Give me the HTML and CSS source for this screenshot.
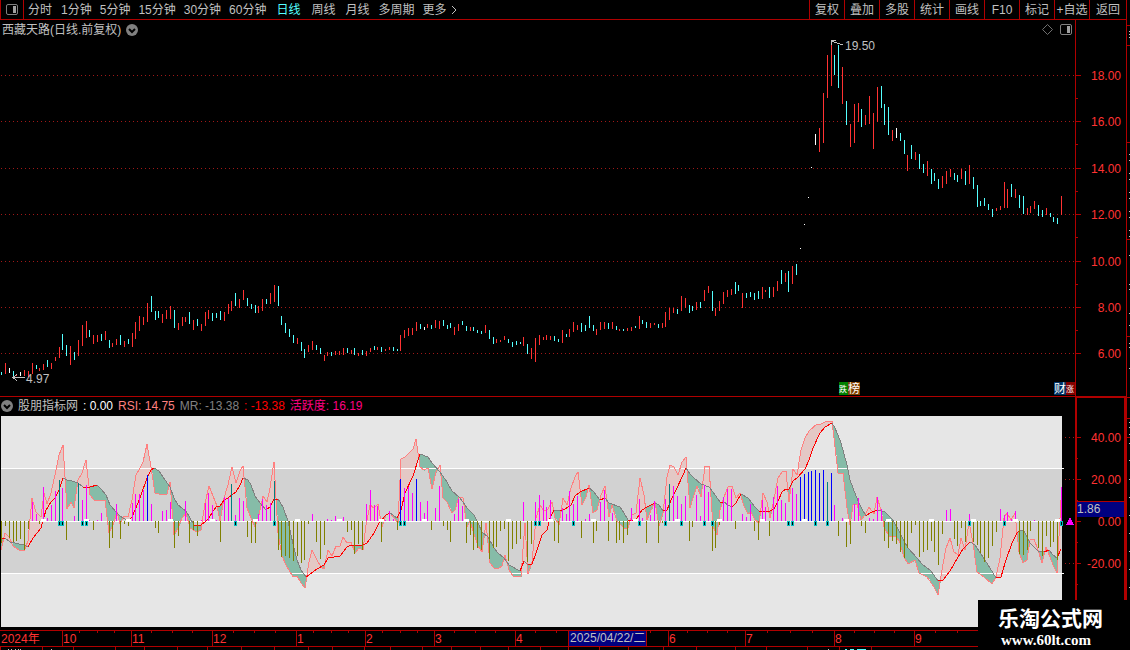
FILE: index.html
```html
<!DOCTYPE html>
<html lang="zh-CN">
  <head>
    <meta charset="utf-8">
    <title>西藏天路</title>
    <link rel="stylesheet" href="styles.css">
  </head>
  <body>
    <div class="app">
      <div class="main">
        <header class="toolbar">
          <button class="layout-button" aria-label="布局">
            <svg width="12" height="11" viewBox="0 0 12 11">
              <rect x="0.5" y="0.5" width="11" height="10" rx="1.5" fill="none" stroke="#808080"/>
              <rect x="7" y="2" width="3" height="7" fill="#a0a0a0"/>
            </svg>
          </button>
          <nav class="periods">
            <button class="period short">分时</button>
            <button class="period">1分钟</button>
            <button class="period">5分钟</button>
            <button class="period">15分钟</button>
            <button class="period">30分钟</button>
            <button class="period">60分钟</button>
            <button class="period short active">日线</button>
            <button class="period short">周线</button>
            <button class="period short">月线</button>
            <button class="period">多周期</button>
            <button class="period more">更多
              <svg width="6" height="10" viewBox="0 0 6 10">
                <path d="M1 1 L5 5 L1 9" fill="none" stroke="#c0c0c0"/>
              </svg>
            </button>
          </nav>
          <nav class="tools">
            <button class="tool">复权</button>
            <button class="tool">叠加</button>
            <button class="tool">多股</button>
            <button class="tool">统计</button>
            <button class="tool">画线</button>
            <button class="tool">F10</button>
            <button class="tool">标记</button>
            <button class="tool">+自选</button>
            <button class="tool last">返回</button>
          </nav>
        </header>

        <section class="price-panel">
          <div class="plot">
            <div class="price-title">
              <span>西藏天路(日线.前复权)</span>
              <svg width="12" height="12" viewBox="0 0 12 12">
                <circle cx="6" cy="6" r="6" fill="#808080"/>
                <path d="M3 5 L6 8 L9 5" fill="none" stroke="#000" stroke-width="2"/>
              </svg>
              <span class="title-icons">
                <svg width="11" height="11" viewBox="0 0 11 11">
                  <path d="M5.5 0.5 L10.5 5.5 L5.5 10.5 L0.5 5.5 Z" fill="none" stroke="#707070"/>
                </svg>
                <svg width="12" height="11" viewBox="0 0 12 11">
                  <rect x="0.5" y="0.5" width="11" height="10" rx="1.5" fill="none" stroke="#808080"/>
                  <rect x="7" y="2" width="3" height="7" fill="#a0a0a0"/>
                </svg>
              </span>
            </div>
            <svg class="chart" id="priceChart" height="357"></svg>
          </div>
          <svg class="axis" id="priceAxis" width="50" height="376" viewBox="1076 20 50 376"></svg>
        </section>

        <section class="indicator-panel">
          <div class="plot">
            <div class="indicator-title">
              <svg width="12" height="12" viewBox="0 0 12 12">
                <circle cx="6" cy="6" r="6" fill="#808080"/>
                <path d="M3 5 L6 8 L9 5" fill="none" stroke="#000" stroke-width="2"/>
              </svg>
              <span class="name">股朋指标网</span>
              <span class="zero">: 0.00</span>
              <span class="rsi">RSI: 14.75</span>
              <span class="mr">MR: -13.38</span>
              <span class="mr-red">: -13.38</span>
              <span class="activity">活跃度: 16.19</span>
            </div>
            <svg class="chart" id="indicatorChart" height="215"></svg>
          </div>
          <svg class="axis" id="indicatorAxis" width="47" height="232" viewBox="1077 398 47 232"></svg>
        </section>

        <svg class="chart" id="dateAxis" height="20"></svg>
      </div>
      <svg class="side" id="sideStrip" width="3" height="650" viewBox="1127 0 3 650"></svg>

      <div class="watermark">
        <div class="site-name">乐淘公式网</div>
        <div class="site-url">www.60lt.com</div>
      </div>
    </div>
    <script src="chart.js"></script>
  </body>
</html>
```
FILE: styles.css
```css
body{
  margin: 0;
  background-color: black;
  color: #c0c0c0;
  font-family: "Liberation Sans", "Noto Sans CJK SC", sans-serif;
  font-size: 12px;
  line-height: 18px;
  overflow: hidden;
}
svg{
  display: block;
  flex: none;
}
svg text{
  font-size: 12px;
}
svg .half{
  font-size: 8px;
}
button{
  margin: 0;
  padding: 0;
  border: 0;
  background: none;
  color: inherit;
  font: inherit;
  white-space: nowrap;
  cursor: pointer;
}
.app{
  position: relative;
  display: flex;
}
.main{
  flex: 1;
  min-width: 0;
}
.side{
  border-left: 1px solid #b00000;
}

/* toolbar */
.toolbar{
  display: flex;
  height: 19px;
  border-bottom: 1px solid #b00000;
}
.layout-button{
  display: flex;
  align-items: center;
  justify-content: center;
  width: 24px;
  box-sizing: border-box;
  border-left: 1px solid #b00000;
  border-right: 1px solid #b00000;
}
.periods{
  display: flex;
  gap: 8px;
  padding-left: 3px;
}
.short{
  padding: 0 1px;
}
.active{
  padding: 0 2px;
  color: #54ffff;
}
.more{
  display: flex;
  align-items: center;
  gap: 4px;
}
.tools{
  display: flex;
  margin-left: auto;
}
.tool{
  width: 35px;
  box-sizing: border-box;
  border-left: 1px solid #b00000;
}
.last{
  width: 37px;
}

/* panels */
.price-panel,
.indicator-panel{
  display: flex;
}
.price-panel{
  border-bottom: 1px solid #b00000;
}
.plot{
  flex: 1;
  min-width: 0;
}
.chart{
  width: 100%;
  shape-rendering: crispEdges;
}
.axis{
  shape-rendering: crispEdges;
  border-left: 1px solid #b00000;
}
.indicator-panel .axis{
  border: 2px solid #b00000;
  border-top-width: 1px;
  border-bottom: 0;
}
.price-title,
.indicator-title{
  display: flex;
  align-items: center;
  white-space: nowrap;
}
.price-title{
  height: 19px;
  gap: 5px;
  padding-left: 2px;
}
.title-icons{
  display: flex;
  gap: 7px;
  margin-left: auto;
  padding-right: 3px;
}
.indicator-title{
  height: 18px;
  gap: 5px;
  padding-left: 1px;
}
.zero{
  color: white;
}
.rsi{
  color: #ff8080;
}
.mr{
  color: #808080;
}
.mr-red{
  color: #ff0000;
}
.activity{
  color: #ff0080;
}

.watermark{
  position: absolute;
  right: 0;
  bottom: 0;
  width: 152px;
  height: 50px;
  box-sizing: border-box;
  padding: 2px 0 0 20px;
  background-color: black;
  color: white;
  font-weight: bold;
}
.site-name{
  font-family: "Noto Sans CJK SC", sans-serif;
  font-size: 21px;
  line-height: 30px;
}
.site-url{
  padding-left: 3px;
  font-family: "Liberation Serif", serif;
  font-size: 15px;
  line-height: 16px;
}
```
FILE: chart.js
```js
const RED = '#b00000';
const BASE_WIDTH = 1075;
const STEP = 3.841;
const ZERO = 521;

// one item per day: colour, high, low
const candles = `
c372-375 r363-374 w368-373 c371-377 r374-376 w372-376 r370-376 r371-377 r363-374 c365-369
r368-371 r364-370 c360-367 r363-369 r357-361 r347-358 c334-350 c345-356 r346-365 c352-360
r340-356 r325-346 r321-338 c330-337 r335-344 r335-342 c334-341 r331-340 c340-348 r343-347
r339-345 c335-345 r341-347 c339-344 r333-347 r322-339 r316-331 r317-325 r303-322 c296-312
c311-320 c311-318 r314-323 r310-319 r306-319 c310-328 r323-330 r317-326 r317-322 c312-324
r320-330 c319-326 r324-331 r312-326 r310-319 c313-321 c313-318 c311-320 r312-321 r304-314
r301-311 c293-306 r299-308 r290-300 c298-306 c304-309 c305-313 r306-313 r299-311 c299-304
r293-304 r285-302 c286-306 c316-325 c323-333 c329-337 c335-343 r338-344 c342-351 c349-358
r345-352 r341-350 c345-350 c348-354 r355-361 r352-356 c352-356 r351-355 r351-355 r348-355
c348-353 r350-354 c348-355 r353-356 c350-355 r351-356 r348-352 c346-350 r347-350 c347-352
r349-351 r347-350 c347-351 c349-351 r335-351 r330-338 r328-336 r328-335 r322-331 c324-329
w327-330 r324-328 c325-329 r320-328 r321-329 c320-326 c325-329 c323-328 r327-335 r324-331
c321-325 c326-331 r327-331 c327-331 c330-333 c331-334 r325-333 c330-339 c337-344 r339-343
r340-342 r336-340 c339-343 c342-347 c341-345 c342-344 r337-346 c344-354 r348-359 r338-362
r335-345 r337-340 r335-340 r336-340 c336-341 c339-342 r330-343 c334-337 r329-337 r322-332
r325-330 c323-332 c325-331 c316-328 c325-331 r329-335 r322-330 r322-329 c323-329 r322-329
c326-330 r329-331 c329-331 r328-331 r327-331 c326-328 r316-329 c320-324 c322-328 r323-328
r323-325 c324-328 r323-328 r312-327 r308-320 r308-313 c309-314 r296-311 r298-308 c305-313
c306-311 r302-310 c302-308 r290-301 r286-293 c291-311 r308-316 r301-311 r292-304 r290-297
r289-295 c282-294 c285-291 r293-308 c293-298 c292-297 c293-300 c291-299 r287-299 r290-292
c287-298 r287-297 r281-291 c270-284 r273-282 c271-292 r266-284 c264-275 w248-249 w224-225
w197-198 w167-168 w134-145 r128-152 r93-143 r55-98 r43-86 c55-75 c45-88 r67-104
c101-125 r124-147 r104-143 r103-122 c109-127 r115-125 r96-124 r113-149 r87-122 c86-108
c104-125 c107-135 r130-141 w128-138 c133-141 c140-154 r155-171 c145-159 r152-160 c154-169
c164-173 r161-176 c169-184 c173-181 c179-189 r176-188 r171-184 r169-177 c173-180 c175-182
r169-179 c171-185 r165-184 c177-189 c185-207 c201-206 c198-206 c204-210 c209-217 r208-211
r206-210 r182-208 r189-208 c184-197 r189-198 c195-208 c196-214 r208-215 r206-213 r201-209
c205-216 c210-217 r208-215 c213-217 c217-222 c218-224 r196-215`.trim().split(/\s+/);

// histogram heights, t and b mark the teal and blue bars
const histogram = `
-22 -5 -17 -21 -20 -18 -29 -8 19 7 -3 34 3 16 30 41t 33 -19 0 5
38t 21 36 1 -9 1 8 0 -27 -17 17 -18 -3 -5 18 27 27 31 46b 17
-7 -12 10 11 19 -27 -15 0 20 -22 -9 -15 1 18 28 16 1 -21 24 23
37t 6 23 20 -16 -22 -22 7 22 16 18 40t -29 -36 -35 -37 -40 -35 -42 -39
-3 7 -21 -38 -24 2 1 5 2 4 -11 -9 -33 -23 -29 17 31 16 15 -21
1 10 2 -9 42b 33 34 28 42b 19 8 20 -9 13 35 -5 -9 -21 7 22
15 -22 -14 -29 -27 -29 0 -38 -27 -26 -10 -8 -40 -28 -23 -18 19 -41 -23 19
26 21 14 21 -20 -22 13 7 30 17 25 -17 2 7 -22 -10 19 31 -20 8
-22 -19 -22 -14 13 2 22 3 -22 6 20 -22 -2 22 37t 35 25 17 25 -20
-6 26 5 36 29 -30 -27 -4 24 32 32 -8 0 7 4 17 -10 -19 21 14
-15 24 35 21 18 0 33 27 44b 47b 49b 50b 51b 48b 51b 39t 48b 16 -15 3
-26 -23 17 23 -5 -12 3 2 24 12 -20 -27 -20 -23 -31 -37 -27 -12 -4 -36
-31 -29 -20 -31 -44 -13 11 12 -18 -25 -7 -21 7 -21 -24 -32 -41 -37 -25 -11
12 6 9 2 10 -33 -34 -29 -10 1 -27 -35 -15 -26 -21 -39 34`.trim().split(/\s+/);

const fast = points(`
1,550 5,533 9,537 13,546 19,550 24,551 28,541 32,498 36,512 41,517 44,493 47,504 51,493 55,475 59,455
63,445 67,509 71,502 74,508 78,480 82,473 86,460 90,495 94,500 101,501 105,500 109,533 113,525 117,512
120,524 124,516 128,517 132,500 136,475 140,468 143,462 147,444 151,467 155,493 159,494 167,494 170,482
174,535 178,528 182,518 186,513 190,528 197,532 201,530 205,503 209,486 213,496 217,506 220,521 224,498
228,485 232,467 236,483 240,471 243,466 247,508 251,518 255,527 259,515 263,496 267,502 270,488 274,462
278,533 282,556 286,565 293,577 297,576 301,583 305,588 309,562 312,550 317,560 321,567 324,569 328,550
332,556 336,546 340,546 343,537 347,543 351,542 355,553 359,548 363,550 366,525 370,505 374,508 378,504
382,527 386,515 390,513 394,518 398,523 401,459 405,457 409,453 413,449 416,439 420,467 424,470 428,468
432,489 436,472 440,465 443,498 447,502 452,513 455,510 459,497 463,498 467,527 470,521 474,534 478,546
482,552 486,523 490,563 494,568 498,569 502,566 505,555 509,570 513,576 521,576 525,523 528,574 532,562
536,518 540,505 544,511 548,509 552,502 555,518 559,525 563,498 567,505 571,488 575,477 578,472 582,505
586,497 589,485 593,513 597,510 601,495 605,486 609,517 612,505 617,521 624,528 628,528 632,515 636,513
640,478 644,495 647,520 651,510 655,502 659,526 663,513 667,477 670,465 674,467 678,475 682,462 686,457
690,508 693,498 697,486 701,497 705,466 709,466 713,527 717,535 720,510 724,497 728,487 732,486 736,498
740,493 744,506 748,514 751,512 755,520 759,523 763,493 767,502 770,518 774,499 778,478 782,472 786,471
789,502 793,469 797,475 801,450 805,438 809,431 817,424 821,424 825,422 832,421 835,447 838,473 843,473
847,508 850,525 853,505 857,504 861,520 865,515 869,507 874,514 877,497 881,510 884,527 889,536 896,536
900,543 904,557 908,564 915,560 919,573 927,577 934,587 938,595 942,570 946,548 950,538 954,552 958,555
961,538 965,550 969,522 973,543 977,572 984,577 992,584 996,577 1000,558 1004,518 1007,513 1011,520
1015,513 1019,552 1023,563 1027,560 1030,540 1034,539 1038,550 1042,563 1046,547 1050,557 1053,565
1057,573 1061,500`);

const slow = points(`
1,538 5,538 10,542 24,545 28,547 33,538 41,528 46,510 51,502 55,498 59,490 63,478 67,480 72,481 78,483
83,487 90,487 97,485 101,489 106,495 110,505 117,513 120,516 128,521 132,517 140,498 147,478 151,470
154,468 159,471 163,477 170,487 174,498 178,505 186,511 190,518 194,525 201,525 205,522 209,518 213,511
217,506 220,506 224,500 228,498 236,492 240,485 243,478 248,480 251,485 255,496 260,503 266,510 270,507
274,499 278,499 283,507 288,521 293,544 297,560 301,570 306,577 309,575 317,569 324,565 328,558 340,556
347,547 351,545 363,545 367,543 374,533 379,523 386,515 390,513 397,518 401,510 405,493 413,476 420,454
428,457 432,463 440,472 447,482 452,491 459,497 463,502 467,508 474,515 478,523 482,532 488,537 494,548
498,553 504,558 509,565 520,571 524,561 528,565 532,564 536,553 542,535 547,530 550,518 554,510 560,511
565,509 571,505 575,496 580,492 589,488 593,491 600,500 605,498 609,503 620,507 624,513 628,520 636,520
642,510 647,507 655,503 659,505 663,511 667,510 671,500 677,488 683,475 686,468 690,474 694,478 701,484
709,487 713,492 720,502 724,502 728,505 732,507 736,503 741,494 748,498 755,507 759,511 770,511 774,509
778,501 782,492 786,489 789,489 793,481 798,477 805,469 809,460 813,448 820,433 825,427 832,423 835,428
840,440 843,450 847,465 850,480 856,496 861,507 866,516 870,513 877,510 885,512 892,519 897,527 903,539
908,548 917,558 922,564 931,571 938,581 943,580 950,571 958,557 963,549 970,542 975,545 983,557 990,568
996,578 1001,577 1005,563 1012,543 1017,533 1020,530 1024,531 1030,543 1038,551 1044,552 1049,550
1053,555 1057,558 1061,549`);

const signals = [15, 16, 21, 22, 61, 71, 104, 105, 139, 140, 149, 166, 173, 177, 183, 185, 205, 206, 212, 215, 252, 261, 276];
const prices = [[75, '18.00'], [121, '16.00'], [168, '14.00'], [214, '12.00'], [261, '10.00'], [307, '8.00'], [353, '6.00']];
const months = [[62, '10'], [131, '11'], [212, '12'], [296, '1'], [365, '2'], [434, '3'], [515, '4'], [668, '6'], [745, '7'], [834, '8'], [914, '9']];

let k = 1;

function points(text){
  return text.trim().split(/\s+/).map((p) => p.split(',').map(Number));
}
function at(line, x){
  for(let i=1; i<line.length; i++){
    if(x <= line[i][0]){
      const [x1, y1] = line[i-1];
      const [x2, y2] = line[i];
      return y1 + (y2 - y1) * (x - x1) / (x2 - x1);
    }
  }
  return line[line.length-1][1];
}
function sx(x){
  return Math.round(x * k);
}
function barX(i){
  return Math.round((1 + i * STEP) * k);
}
function rect(x, y, w, h, fill){
  return `<rect x="${x}" y="${y}" width="${w}" height="${h}" fill="${fill}"/>`;
}
function label(x, y, text, fill, anchor='start'){
  return `<text x="${x}" y="${y}" fill="${fill}" text-anchor="${anchor}">${text}</text>`;
}
function halfLabel(x, y, text){
  return `<text class="half" x="${x}" y="${y}" fill="white">${text}</text>`;
}
function dots(x1, x2, y){
  let html = '';
  for(let x=x1; x<x2; x+=4){
    html += rect(x, y, 1, 1, '#a01818');
  }
  return html;
}
function draw(id, top, html){
  const svg = document.getElementById(id);
  svg.setAttribute('viewBox', `0 ${top} ${svg.clientWidth} ${svg.getAttribute('height')}`);
  svg.innerHTML = html;
}

function drawPrice(width){
  const colors = {c: '#54ffff', r: '#ff3232', w: '#ffffff'};
  let html = '';
  prices.forEach(([y]) => html += dots(1, width, y));
  candles.forEach((item, i) => {
    const [high, low] = item.slice(1).split('-').map(Number);
    html += rect(barX(i), high, 1, low - high, colors[item[0]]);
  });
  const peak = sx(831);
  html += `<path d="M${peak + 12} 45 L${peak} 41 M${peak + 5} 40 H${peak} V45" fill="none" stroke="#c0c0c0"/>`;
  html += label(peak + 14, 50, '19.50', '#c0c0c0');
  html += `<path d="M25 377.5 H13 M17 374 L13 377.5 L17 381" fill="none" stroke="#c0c0c0"/>`;
  html += label(26, 383, '4.97', '#c0c0c0');

  const badge = sx(839);
  html += rect(badge, 382, 9, 13, '#008000') + halfLabel(badge, 392, '跌');
  html += rect(badge + 9, 382, 12, 13, '#804000') + label(badge + 9, 393, '榜', 'white');
  html += rect(width - 21, 382, 12, 13, '#003366') + label(width - 21, 393, '财', 'white');
  html += rect(width - 9, 382, 9, 13, '#800000') + halfLabel(width - 9, 392, '涨');
  draw('priceChart', 39, html);
}

function drawIndicator(width){
  const right = barX(276) + 1;
  let html = rect(1, 416, right - 1, 211, '#e6e6e6') + rect(1, 469, right - 1, 104, '#d2d2d2');

  // area between the two lines
  let fills = '';
  let slowLine = '';
  for(let x=1; x<1061; x++){
    const f = at(fast, x);
    const s = at(slow, x);
    const top = Math.round(Math.min(f, s));
    fills += rect(sx(x), top, Math.ceil(k), Math.round(Math.abs(f - s)), f < s ? '#e4c8c5' : '#86bca8');
  }
  for(let i=1; i<slow.length; i++){
    const [x1, y1] = slow[i-1];
    const [x2, y2] = slow[i];
    slowLine += `<path d="M${sx(x1)} ${y1} L${sx(x2)} ${y2}" stroke="${y2 <= y1 ? '#ff0000' : '#808080'}"/>`;
  }
  html += fills;
  html += rect(1, 468, right + 1, 1, 'white') + rect(1, 573, right + 1, 1, 'white') + rect(1, ZERO, right - 1, 1, 'white');
  html += `<polyline points="${fast.map(([x, y]) => sx(x) + ',' + y).join(' ')}" fill="none" stroke="#ff8080"/>`;
  html += slowLine;

  histogram.forEach((item, i) => {
    const v = parseInt(item);
    let color = v > 0 ? '#ff00ff' : '#808000';
    if(item.endsWith('t')) color = '#008080';
    if(item.endsWith('b')) color = '#0000ff';
    html += rect(barX(i), v > 0 ? ZERO - v : ZERO, 1, Math.abs(v), color);
    if(i % 11 === 0 && i > 0){
      html += rect(barX(i) - 2, 519, 5, 3, 'white');
    }
  });
  signals.forEach((i) => {
    html += rect(barX(i) - 1, 521, 3, 5, '#00c0c0') + rect(barX(i), 522, 1, 3, 'black');
  });

  [437, 479, 563].forEach((y) => html += dots(width - 10, width, y));
  html += `<path d="M${width - 9} 525 L${width - 5} 517 L${width - 1} 525 Z" fill="#ff00ff"/>`;
  draw('indicatorChart', 415, html);
}

function drawAxes(){
  let html = '';
  prices.forEach(([y, text], i) => {
    html += rect(1076, y, 5, 1, RED) + label(1121, y + 5, text, '#ff3232', 'end');
    html += rect(1076, y + 23, 2, 1, i < 6 ? RED : 'none');
  });
  document.getElementById('priceAxis').innerHTML = html;

  html = '';
  [[437, '40.00'], [479, '20.00'], [521, '0.00'], [563, '-20.00']].forEach(([y, text]) => {
    html += rect(1077, y, 4, 1, RED) + rect(1077, y + 21, 1, 1, RED) + label(1121, y + 5, text, '#ff3232', 'end');
  });
  html += rect(1077, 501, 47, 1, RED) + rect(1077, 502, 47, 15, '#000080') + label(1077, 513, '1.86', '#c0c0c0');
  document.getElementById('indicatorAxis').innerHTML = html;

  html = '';
  [25, 45, 142, 239, 336, 397, 418, 437].forEach((y) => html += rect(1127, y, 3, 1, RED));
  [31, 34, 37, 154, 160, 173, 179, 192, 198, 211, 217, 230, 236, 255, 284, 289, 313, 325, 343, 347, 368, 422, 427, 434, 443, 460, 479, 497, 515, 533, 551, 569, 587].forEach((y) => {
    html += rect(1129, y, 1, 1, '#c0c0c0');
  });
  document.getElementById('sideStrip').innerHTML = html;
}

function drawDates(width){
  let html = rect(0, 630, width, 1, RED) + rect(0, 646, width, 1, RED);
  html += label(1, 643, '2024年', '#ff3232');
  months.forEach(([x, text]) => {
    html += rect(sx(x), 631, 1, 15, RED) + label(sx(x) + 1, 643, text, '#ff3232');
  });
  [79, 97, 114, 151, 172, 192, 233, 254, 275, 313, 331, 348, 382, 400, 417, 454, 475, 495, 535, 556, 650, 687, 707, 727, 767, 790, 812, 854, 874, 894, 935, 957].forEach((x) => {
    html += rect(sx(x), 631, 1, 2, RED);
  });
  [0, 42, 73, 115, 144, 177, 207, 241, 274, 308, 332, 364, 390, 422, 451, 480, 508, 540, 568, 599, 628, 663, 696, 735, 766, 807, 839, 871].forEach((x) => {
    html += rect(sx(x), 647, 1, 3, RED);
  });
  html += rect(sx(568), 631, 79, 15, '#000080') + rect(sx(568), 631, 1, 15, RED) + rect(sx(568) + 78, 631, 1, 15, RED);
  html += label(sx(568) + 2, 642, '2025/04/22/二', '#c0c0c0');
  // tops of the ticker line under the axis
  [8, 11, 15, 18, 20, 51, 828].forEach((x) => html += rect(sx(x), 649, 1, 1, '#c0c0c0'));
  [[845, 2], [850, 4], [857, 9]].forEach(([x, w]) => html += rect(sx(x), 649, w, 1, '#54ffff'));
  draw('dateAxis', 630, html);
}

function render(){
  const width = document.getElementById('priceChart').clientWidth;
  k = width / BASE_WIDTH;
  drawPrice(width);
  drawIndicator(document.getElementById('indicatorChart').clientWidth);
  drawAxes();
  drawDates(document.getElementById('dateAxis').clientWidth * BASE_WIDTH / BASE_WIDTH);
}

render();
window.addEventListener('resize', render);
```
